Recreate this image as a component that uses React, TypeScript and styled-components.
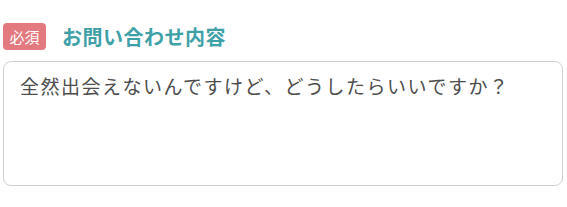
import { createGlobalStyle } from 'styled-components'
import styled from 'styled-components'

const GlobalStyle = createGlobalStyle`
  html, body {
    margin: 0;
    padding: 0;
    background: #ffffff;
  }
  body {
    font-family: "Noto Sans CJK JP", "Noto Sans", sans-serif;
  }
`

const Field = styled.div`
  display: flex;
  flex-direction: column;
  gap: 11px;
  padding: 23px 5px 0 3px;
`

const LabelRow = styled.div`
  display: flex;
  align-items: center;
  gap: 16px;
`

const RequiredBadge = styled.span`
  display: inline-flex;
  align-items: center;
  justify-content: center;
  width: 43px;
  height: 27px;
  border-radius: 4px;
  background: #e27a80;
  color: #ffffff;
  font-size: 15px;
  line-height: 1;
`

const Label = styled.label`
  color: #3fa1a8;
  font-size: 20px;
  font-weight: 700;
  letter-spacing: 0.5px;
  line-height: 1;
`

const Message = styled.textarea`
  box-sizing: border-box;
  width: 560px;
  height: 125px;
  margin: 0;
  padding: 10px 16px;
  border: 1.5px solid #cfcfcf;
  border-radius: 8px;
  background: #ffffff;
  color: #4d4d4d;
  font-family: "Noto Sans CJK JP", "Noto Sans", sans-serif;
  font-size: 19px;
  letter-spacing: 1.5px;
  line-height: 27px;
  resize: none;
  outline: none;
`

export default function App() {
  return (
    <>
      <GlobalStyle />
      <Field>
        <LabelRow>
          <RequiredBadge>必須</RequiredBadge>
          <Label htmlFor="inquiry">お問い合わせ内容</Label>
        </LabelRow>
        <Message
          id="inquiry"
          readOnly
          defaultValue="全然出会えないんですけど、どうしたらいいですか？"
        />
      </Field>
    </>
  )
}
